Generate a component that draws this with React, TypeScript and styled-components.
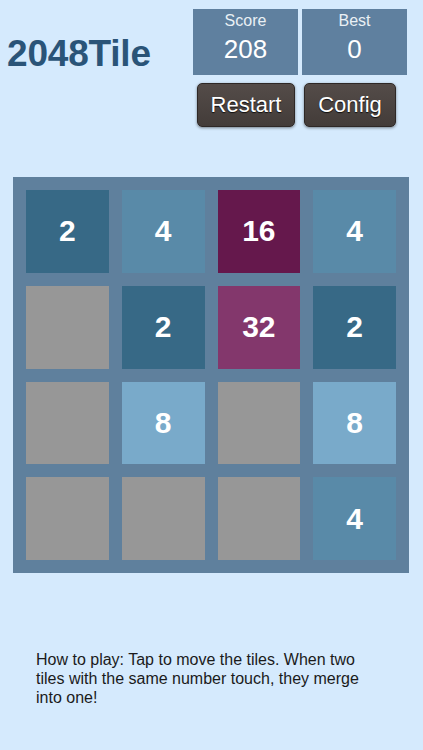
import React from "react";
import styled, { createGlobalStyle } from "styled-components";

const GlobalStyle = createGlobalStyle`
  html, body {
    margin: 0;
    padding: 0;
    background: #d5eafd;
    font-family: "Liberation Sans", Arial, Helvetica, sans-serif;
  }
`;

const Page = styled.div`
  width: 423px;
  height: 750px;
  background: #d5eafd;
  display: flex;
  flex-direction: column;
`;

const Header = styled.header`
  display: flex;
  justify-content: space-between;
  align-items: flex-start;
  padding: 9px 16px 0 7px;
`;

const Title = styled.h1`
  margin: 24px 0 0;
  font-size: 37px;
  font-weight: bold;
  color: #2a5478;
  letter-spacing: -0.2px;
`;

const Side = styled.div`
  display: flex;
  flex-direction: column;
  align-items: center;
`;

const Scores = styled.div`
  display: flex;
  gap: 4px;
`;

const ScoreBox = styled.div`
  width: 105px;
  height: 66px;
  background: #5f809f;
  display: flex;
  flex-direction: column;
  align-items: center;
  color: #fff;
`;

const ScoreLabel = styled.span`
  font-size: 16px;
  margin-top: 3px;
  color: #eaf0f5;
`;

const ScoreValue = styled.span`
  font-size: 26px;
  margin-top: 4px;
`;

const Buttons = styled.div`
  display: flex;
  gap: 9px;
  margin-top: 8px;
  margin-right: 7px;
`;

const Button = styled.button<{ $width: number }>`
  width: ${(p) => p.$width}px;
  height: 44px;
  border: 1px solid #2e2826;
  border-radius: 5px;
  background: linear-gradient(#544c49, #433c39);
  color: #fff;
  font-family: inherit;
  font-size: 22px;
  text-shadow: 0 1px 1px rgba(0, 0, 0, 0.8);
  box-shadow: 0 1px 3px rgba(0, 0, 0, 0.45);
  padding: 0;
`;

const Board = styled.div`
  margin: 50px 0 0 13px;
  width: 396px;
  height: 396px;
  box-sizing: border-box;
  padding: 13px;
  background: #5f809d;
  display: grid;
  grid-template-columns: repeat(4, 1fr);
  grid-template-rows: repeat(4, 1fr);
  gap: 13px;
`;

const tileColors: Record<number, string> = {
  0: "#979797",
  2: "#376986",
  4: "#598aa8",
  8: "#79aaca",
  16: "#65184c",
  32: "#83376c",
};

const Tile = styled.div<{ $value: number }>`
  background: ${(p) => tileColors[p.$value] ?? "#979797"};
  display: flex;
  align-items: center;
  justify-content: center;
  color: #fff;
  font-size: 30px;
  font-weight: bold;
`;

const HowTo = styled.p`
  margin: 77px 0 0 36px;
  width: 346px;
  font-size: 16px;
  line-height: 19px;
  color: #1b1b1b;
`;

const grid = [
  [2, 4, 16, 4],
  [0, 2, 32, 2],
  [0, 8, 0, 8],
  [0, 0, 0, 4],
];

export default function App() {
  return (
    <Page>
      <GlobalStyle />
      <Header>
        <Title>2048Tile</Title>
        <Side>
          <Scores>
            <ScoreBox>
              <ScoreLabel>Score</ScoreLabel>
              <ScoreValue>208</ScoreValue>
            </ScoreBox>
            <ScoreBox>
              <ScoreLabel>Best</ScoreLabel>
              <ScoreValue>0</ScoreValue>
            </ScoreBox>
          </Scores>
          <Buttons>
            <Button $width={98}>Restart</Button>
            <Button $width={92}>Config</Button>
          </Buttons>
        </Side>
      </Header>
      <Board>
        {grid.flat().map((v, i) => (
          <Tile key={i} $value={v}>
            {v > 0 ? v : ""}
          </Tile>
        ))}
      </Board>
      <HowTo>
        How to play: Tap to move the tiles. When two tiles with the same number
        touch, they merge into one!
      </HowTo>
    </Page>
  );
}
